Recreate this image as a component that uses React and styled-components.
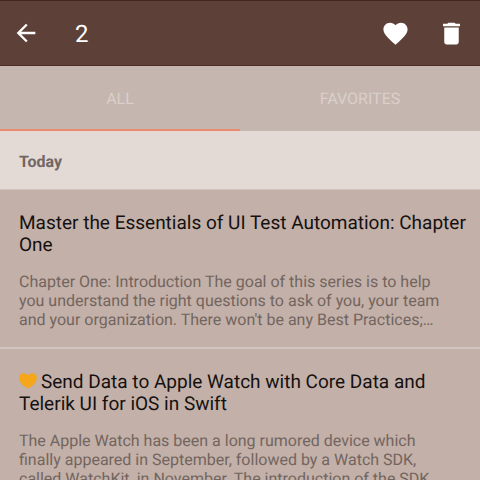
import React from "react";
import styled, { createGlobalStyle } from "styled-components";

const Global = createGlobalStyle`
  * { box-sizing: border-box; }
  body {
    margin: 0;
    background: #c3b0a8;
    font-family: Roboto, "Liberation Sans", sans-serif;
    text-rendering: geometricPrecision;
  }
`;
const Screen = styled.div`
  height: 100vh;
  overflow: hidden;
  display: flex;
  flex-direction: column;
`;
const Toolbar = styled.header`
  flex: none;
  height: 66px;
  padding: 0 14px 0 11px;
  display: flex;
  align-items: center;
  background: #5d4037;
  border-top: 1px solid #412823;
  border-bottom: 1px solid #4e2d26;
  color: #fff;
`;
const IconButton = styled.button`
  width: 30px;
  height: 30px;
  padding: 0;
  border: 0;
  background: none;
  color: inherit;
  display: flex;
  align-items: center;
  justify-content: center;
`;
const Count = styled.h1`
  flex: 1;
  margin: 0 0 0 34px;
  padding-top: 1px;
  font-size: 24px;
  line-height: 28px;
  font-weight: 400;
`;
const Actions = styled.div`
  display: flex;
  gap: 26px;
`;
const Tabs = styled.div`
  flex: none;
  display: flex;
  height: 65px;
  background: #c5b6af;
`;
const Tab = styled.button`
  flex: 1;
  padding: 3px 0 0;
  border: 0;
  border-bottom: 2px solid ${(p) => (p.$active ? "#ec8a6f" : "transparent")};
  background: none;
  color: #dad0cb;
  font: 400 16px/20px Roboto, "Liberation Sans", sans-serif;
  text-rendering: inherit;
`;
const GroupHeader = styled.h2`
  margin: 0;
  padding: 21px 19px 17px;
  background: #e3d9d5;
  border-bottom: 1px solid #d1c5c0;
  color: #706663;
  font-size: 16px;
  line-height: 20px;
  font-weight: 700;
`;
const Article = styled.article`
  padding: 22px 12px 18px 19px;
  border-bottom: 2px solid #d1c5c0;
`;
const Title = styled.h3`
  margin: 0 0 16px;
  color: #151110;
  font-size: 19px;
  line-height: 22px;
  font-weight: 400;
`;
const Summary = styled.p`
  margin: 0;
  color: #72655f;
  font-size: 16px;
  line-height: 19px;
`;
const Glyph = styled.svg`
  display: block;
  flex: none;
  fill: currentColor;
`;
const FavoriteMark = styled(Glyph)`
  display: inline-block;
  margin-right: 4px;
  vertical-align: -1px;
  color: #f5a61a;
`;
const HEART = "M12 21.35l-1.45-1.32C5.4 15.36 2 12.28 2 8.5 2 5.42 4.42 3 7.5 3c1.74 0 3.41.81 4.5 2.09C13.09 3.81 14.76 3 16.5 3 19.58 3 22 5.42 22 8.5c0 3.78-3.4 6.86-8.55 11.54L12 21.35z";
const MARK = "M9 15.5C7.2 14.4 0.5 10.8 0.2 5.4C0 2 2.2 0.3 4.8 0.3C6.8 0.3 8.2 1.4 9 2.7C9.8 1.4 11.2 0.3 13.2 0.3C15.8 0.3 18 2 17.8 5.4C17.5 10.8 10.8 14.4 9 15.5Z";
const TRASH = "M6 19c0 1.1.9 2 2 2h8c1.1 0 2-.9 2-2V7H6v12zM19 4h-3.5l-1-1h-5l-1 1H5v2h14V4z";
const ARROW = "M20 11H7.83l5.59-5.59L12 4l-8 8 8 8 1.41-1.41L7.83 13H20v-2z";

const articles = [
  {
    title: "Master the Essentials of UI Test Automation: Chapter One",
    lines: ["Chapter One: Introduction The goal of this series is to help", "you understand the right questions to ask of you, your team", "and your organization. There won't be any Best Practices;…"],
  },
  {
    favorite: true,
    title: "Send Data to Apple Watch with Core Data and Telerik UI for iOS in Swift",
    lines: ["The Apple Watch has been a long rumored device which", "finally appeared in September, followed by a Watch SDK,", "called WatchKit, in November. The introduction of the SDK"],
  },
];

export default function App() {
  return (
    <Screen>
      <Global />
      <Toolbar>
        <IconButton aria-label="Back"><Glyph width="28" height="28" viewBox="0 0 24 24"><path d={ARROW} /></Glyph></IconButton>
        <Count>2</Count>
        <Actions>
          <IconButton aria-label="Favorite"><Glyph width="29" height="29" viewBox="0 0 24 24"><path d={HEART} /></Glyph></IconButton>
          <IconButton aria-label="Delete"><Glyph width="29" height="29" viewBox="0 0 24 24"><path d={TRASH} /></Glyph></IconButton>
        </Actions>
      </Toolbar>
      <Tabs role="tablist">
        <Tab role="tab" aria-selected="true" $active>ALL</Tab>
        <Tab role="tab" aria-selected="false">FAVORITES</Tab>
      </Tabs>
      <main>
        <GroupHeader>Today</GroupHeader>
        {articles.map((a) => (
          <Article key={a.title}>
            <Title>
              {a.favorite && <FavoriteMark width="18" height="16" viewBox="0 0 18 16"><path d={MARK} /></FavoriteMark>}
              {a.title}
            </Title>
            <Summary>{a.lines.map((l) => <React.Fragment key={l}>{l}<br /></React.Fragment>)}</Summary>
          </Article>
        ))}
      </main>
    </Screen>
  );
}
